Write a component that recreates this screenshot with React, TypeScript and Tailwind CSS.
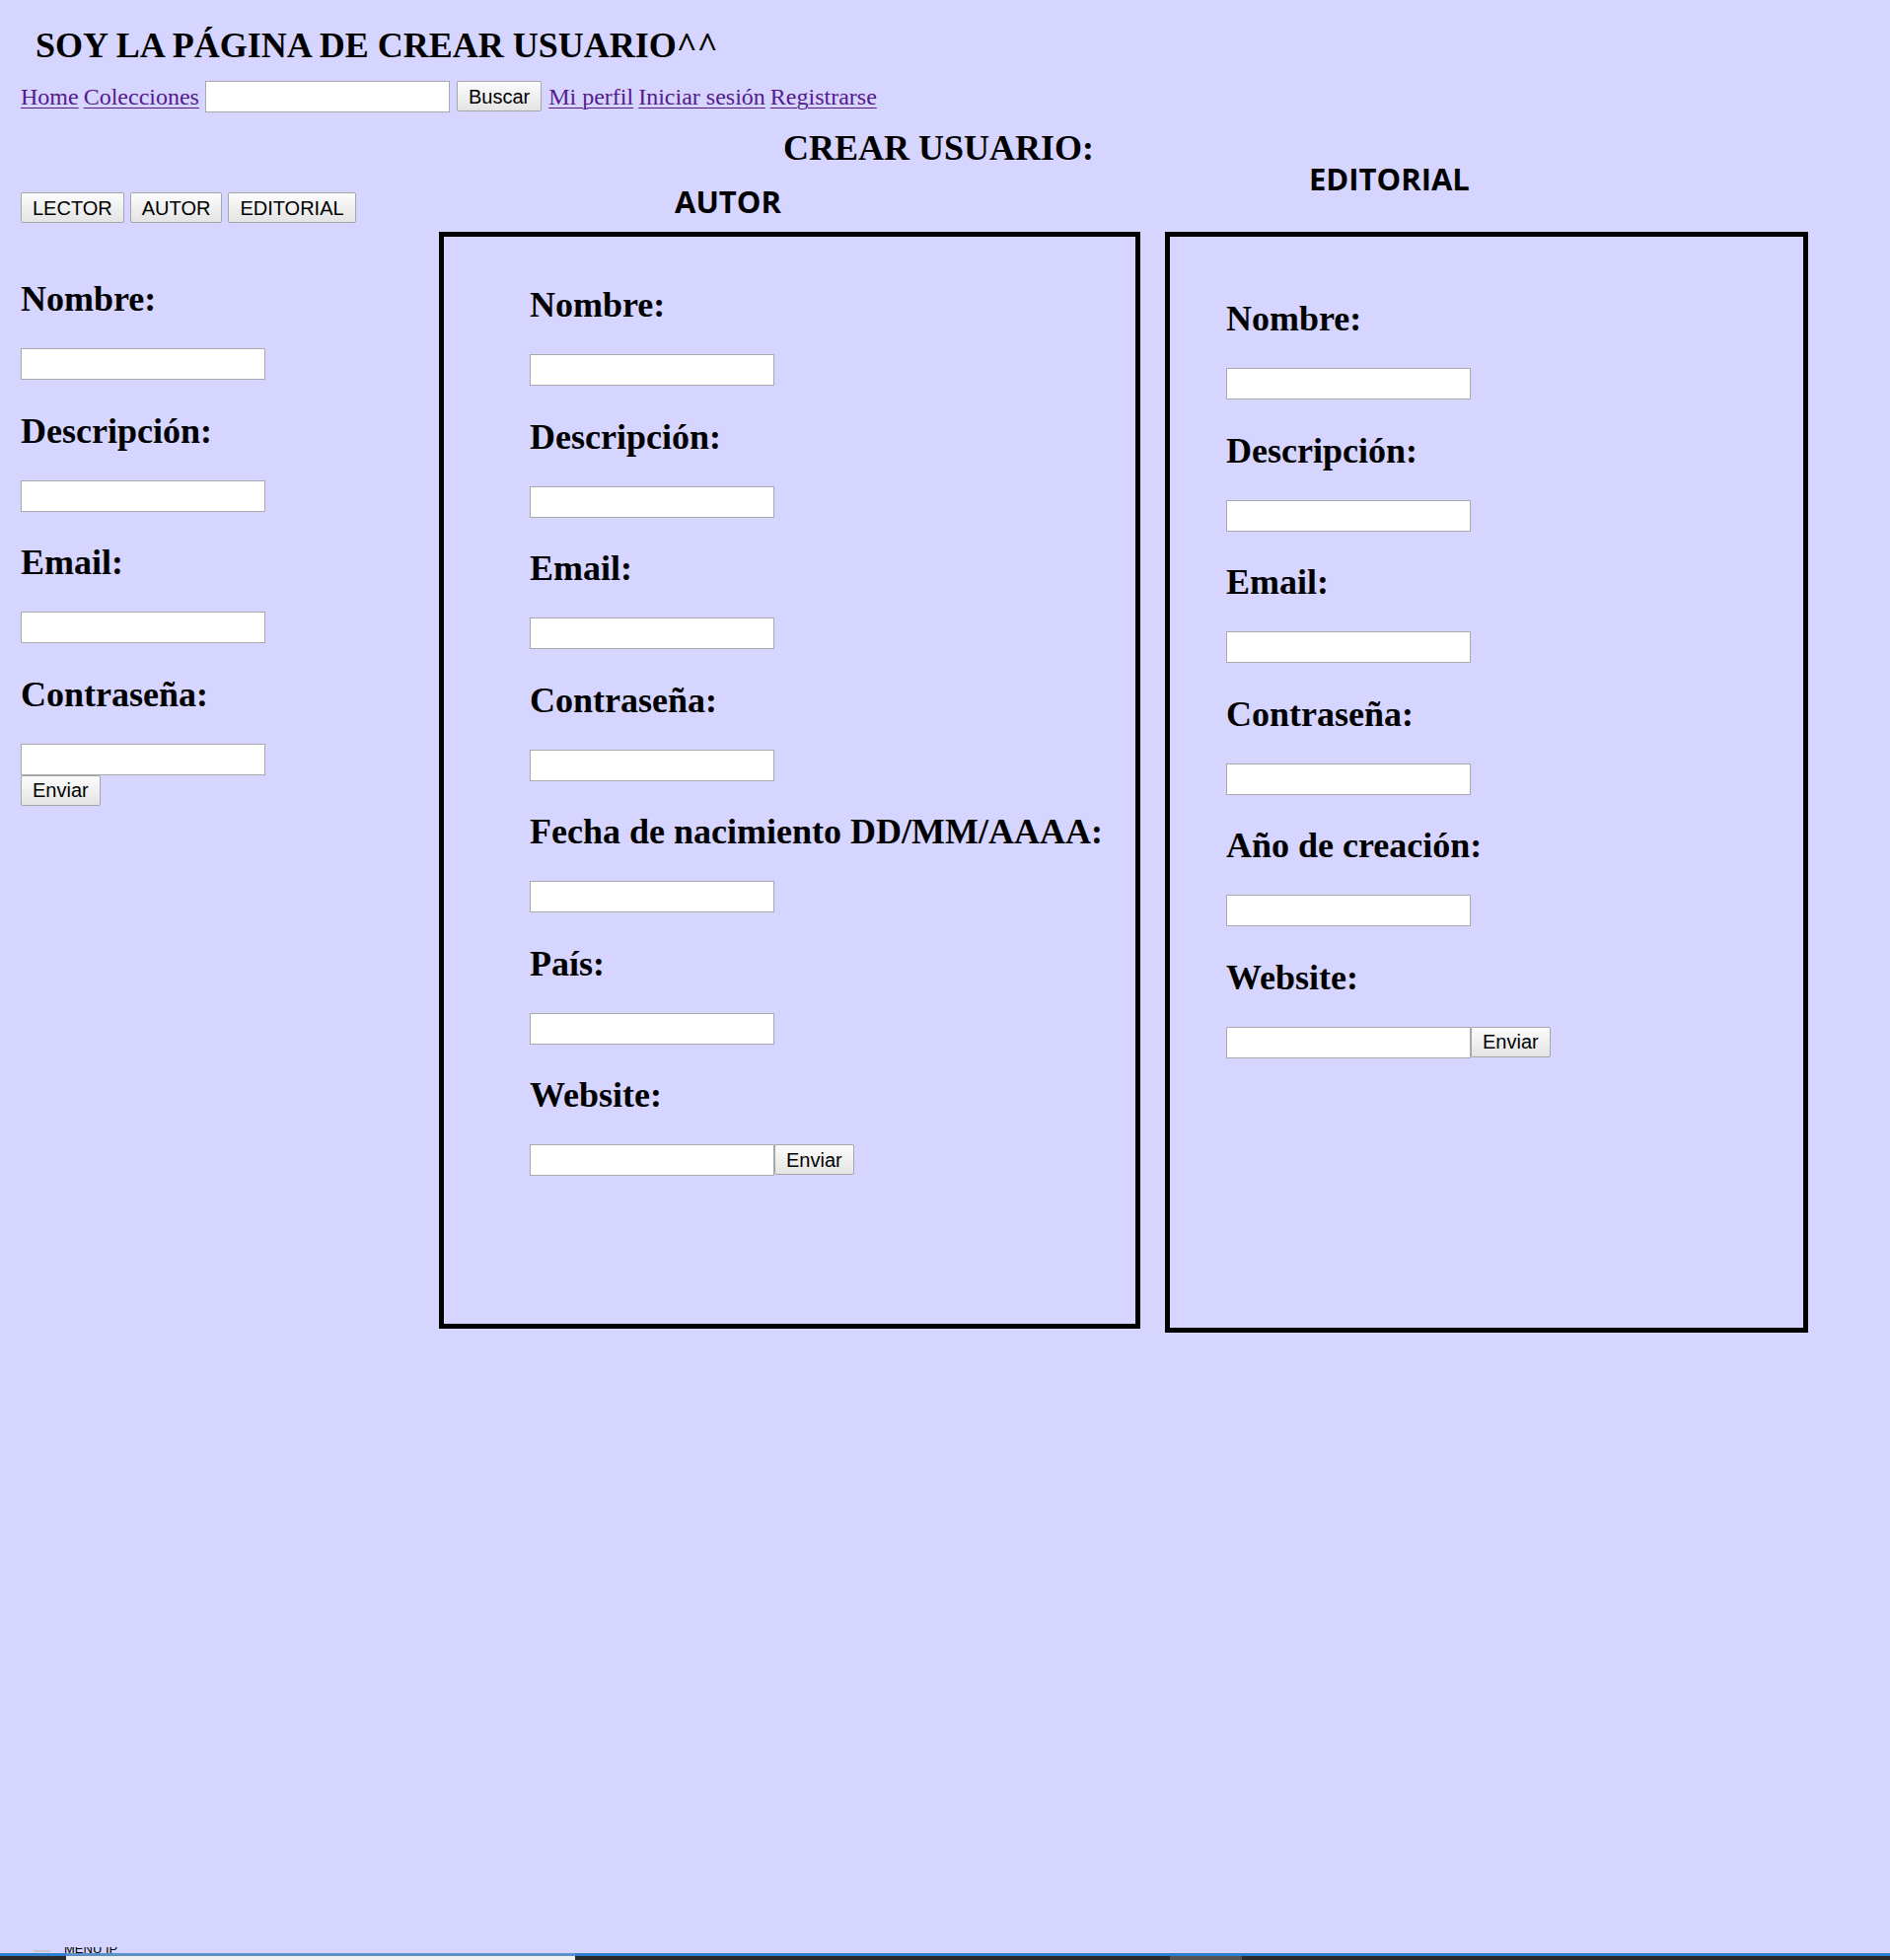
const serif = { fontFamily: '"Liberation Serif", "Times New Roman", serif' };

function Input({ className = "" }: { className?: string }) {
  return (
    <input
      type="text"
      className={`block h-[32px] w-[248px] border border-[#a9a9a9] bg-white px-1 outline-none ${className}`}
    />
  );
}

function Btn({ children }: { children: React.ReactNode }) {
  return (
    <button
      type="button"
      className="h-[31px] shrink-0 rounded-[2px] border border-[#a6a6a6] bg-gradient-to-b from-[#fcfcfc] to-[#e4e4e4] px-[11px] text-[20px] leading-none text-black font-['Liberation_Sans',Arial,sans-serif]"
    >
      {children}
    </button>
  );
}

function Label({ children }: { children: React.ReactNode }) {
  return (
    <div className="mb-[29px] h-[43px] whitespace-nowrap pt-[2px] text-[36px] font-bold leading-[41px] text-black font-['Liberation_Serif','Times_New_Roman',serif]">
      {children}
    </div>
  );
}

type FieldDef = { label: string };

function FieldList({ fields, submitInline }: { fields: FieldDef[]; submitInline: boolean }) {
  return (
    <div className="flex flex-col gap-[29.5px]">
      {fields.map((f, i) => {
        const last = i === fields.length - 1;
        return (
          <div key={f.label}>
            <Label>{f.label}</Label>
            {last && submitInline ? (
              <div className="flex">
                <Input />
                <Btn>Enviar</Btn>
              </div>
            ) : last ? (
              <div className="flex flex-col items-start">
                <Input />
                <Btn>Enviar</Btn>
              </div>
            ) : (
              <Input />
            )}
          </div>
        );
      })}
    </div>
  );
}

const LECTOR_FIELDS = [
  { label: "Nombre:" },
  { label: "Descripción:" },
  { label: "Email:" },
  { label: "Contraseña:" },
];

const AUTOR_FIELDS = [
  ...LECTOR_FIELDS,
  { label: "Fecha de nacimiento DD/MM/AAAA:" },
  { label: "País:" },
  { label: "Website:" },
];

const EDITORIAL_FIELDS = [
  ...LECTOR_FIELDS,
  { label: "Año de creación:" },
  { label: "Website:" },
];

const NAV_LINK =
  "text-[24px] leading-[32px] text-[#551a8b] underline decoration-1 underline-offset-[3px] whitespace-nowrap";

export default function App() {
  return (
    <div className="flex min-h-[1987px] flex-col bg-[#d6d5ff] text-black" style={serif}>
      {/* title */}
      <h1 className="pl-[36px] pt-[26px] text-[36px] font-bold leading-[41px]">
        SOY LA PÁGINA DE CREAR USUARIO^^
      </h1>

      {/* nav */}
      <nav className="mt-[15px] flex items-start gap-[5px] pl-[21px]">
        <a href="#" className={NAV_LINK}>Home</a>
        <a href="#" className={NAV_LINK}>Colecciones</a>
        <Input className="ml-[1px]" />
        <div className="ml-[2px] flex">
          <Btn>Buscar</Btn>
        </div>
        <a href="#" className={`ml-[2px] ${NAV_LINK}`}>Mi perfil</a>
        <a href="#" className={NAV_LINK}>Iniciar sesión</a>
        <a href="#" className={NAV_LINK}>Registrarse</a>
      </nav>

      {/* main */}
      <div className="flex items-start">
        {/* lector */}
        <div className="w-[445px] shrink-0 pl-[21px] pt-[81px]">
          <div className="flex gap-[6px]">
            <Btn>LECTOR</Btn>
            <Btn>AUTOR</Btn>
            <Btn>EDITORIAL</Btn>
          </div>
          <div className="mt-[55px]">
            <FieldList fields={LECTOR_FIELDS} submitInline={false} />
          </div>
        </div>

        {/* autor */}
        <div className="w-[711px] shrink-0">
          <h2 className="mt-[16px] pl-[349px] text-[36px] font-bold leading-[41px]">CREAR USUARIO:</h2>
          <h3 className="mt-[12px] pl-[239px] text-[31px] font-bold leading-[42px] font-['Open_Sans',sans-serif]">
            AUTOR
          </h3>
          <div className="mt-[10px] h-[1112px] border-[5px] border-black pl-[87px] pt-[47px]">
            <FieldList fields={AUTOR_FIELDS} submitInline />
          </div>
        </div>

        {/* editorial */}
        <div className="ml-[25px] w-[652px] shrink-0">
          <h3 className="mt-[46px] pl-[146px] text-[31px] font-bold leading-[42px] font-['Open_Sans',sans-serif]">
            EDITORIAL
          </h3>
          <div className="mt-[33px] h-[1116px] border-[5px] border-black pl-[57px] pt-[61px]">
            <FieldList fields={EDITORIAL_FIELDS} submitInline />
          </div>
        </div>
      </div>

      {/* screen edge strip */}
      <div className="mt-auto">
        <div className="flex h-[6px] items-end overflow-hidden pl-[34px]">
          <div className="mb-[1px] h-[2px] w-[17px] bg-[#c8c8c8]" />
          <div className="ml-[14px] text-[13px] leading-[9px] font-['Liberation_Sans',Arial,sans-serif]">
            MENÚ IP
          </div>
        </div>
        <div className="flex h-[3px] bg-[#2f7fd0]">
          <div className="ml-[67px] w-[516px] bg-[#5a8fc8]" />
        </div>
        <div className="flex h-[4px] bg-[#2b2b2b]">
          <div className="ml-[67px] w-[516px] bg-[#efefef]" />
          <div className="ml-[603px] w-[73px] bg-[#555555]" />
        </div>
      </div>
    </div>
  );
}
